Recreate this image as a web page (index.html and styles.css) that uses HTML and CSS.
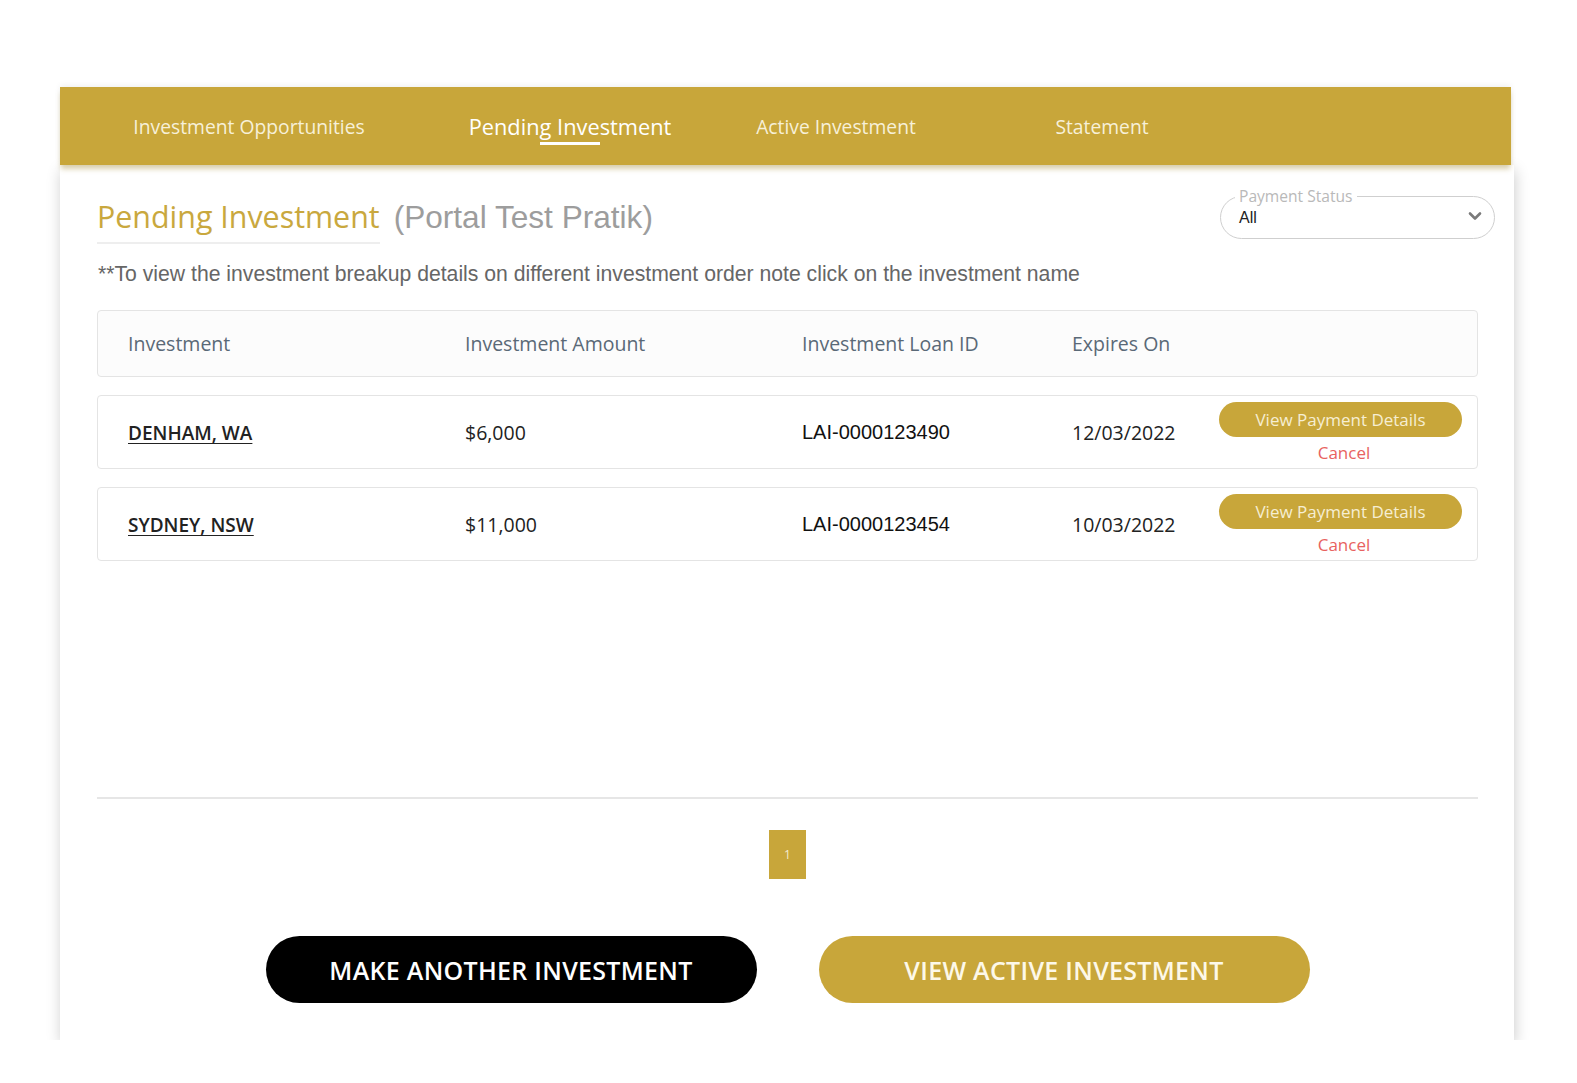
FILE: index.html
```html
<!DOCTYPE html>
<html>
<head>
<meta charset="utf-8">
<link rel="stylesheet" href="styles.css">
</head>
<body>
<div class="panel">
  <nav class="tabs">
    <a class="tab tab-first">Investment Opportunities</a>
    <a class="tab active">Pending Investment</a>
    <a class="tab">Active Investment</a>
    <a class="tab">Statement</a>
  </nav>
  <div class="card">
    <div class="head">
      <h1 class="title"><span class="title-main">Pending Investment</span><span class="title-sub">(Portal Test Pratik)</span></h1>
      <div class="select">
        <span class="select-label">Payment Status</span>
        <span class="select-value">All</span>
        <svg class="chev" width="14" height="10" viewBox="0 0 14 10"><path d="M2 2.5 L7 7.5 L12 2.5" fill="none" stroke="#7a7a7a" stroke-width="2.6" stroke-linecap="round" stroke-linejoin="round"/></svg>
      </div>
    </div>
    <p class="note">**To view the investment breakup details on different investment order note click on the investment name</p>
    <div class="table">
      <div class="row thead">
        <div>Investment</div>
        <div>Investment Amount</div>
        <div>Investment Loan ID</div>
        <div>Expires On</div>
        <div></div>
      </div>
      <div class="row item">
        <div><a class="name">DENHAM, WA</a></div>
        <div>$6,000</div>
        <div class="loan">LAI-0000123490</div>
        <div>12/03/2022</div>
        <div class="actions"><button class="pay">View Payment Details</button><a class="cancel">Cancel</a></div>
      </div>
      <div class="row item">
        <div><a class="name">SYDNEY, NSW</a></div>
        <div>$11,000</div>
        <div class="loan">LAI-0000123454</div>
        <div>10/03/2022</div>
        <div class="actions"><button class="pay">View Payment Details</button><a class="cancel">Cancel</a></div>
      </div>
    </div>
    <div class="pager"><span class="page">1</span></div>
    <div class="cta">
      <button class="big big-dark">MAKE ANOTHER INVESTMENT</button>
      <button class="big big-gold">VIEW ACTIVE INVESTMENT</button>
    </div>
  </div>
</div>
</body>
</html>
```

FILE: styles.css
```css
* { box-sizing: border-box; }
html, body { margin: 0; padding: 0; background: #ffffff; }
body { font-family: "Open Sans", "Liberation Sans", sans-serif; color: #222; }

.panel {
  width: 1454px;
  margin: 87px 0 0 60px;
}

.tabs {
  width: 1451px;
  height: 78px;
  background: #c8a63a;
  display: flex;
  align-items: center;
  padding-left: 56px;
  position: relative;
  z-index: 2;
  box-shadow: 0 5px 5px -1px rgba(150, 120, 30, 0.35), 0 -2px 6px rgba(0,0,0,0.06);
}
.tab {
  width: 266px;
  text-align: center;
  color: #f7f0d8;
  font-size: 19.3px;
  line-height: 30px;
  position: relative;
  top: 1px;
}
.tab-first { margin-right: 55px; }
.tab.active {
  color: #ffffff;
  font-size: 21.8px;
}
.tab.active::after {
  content: "";
  position: absolute;
  left: 50%;
  margin-left: -30px;
  width: 60px;
  height: 3px;
  bottom: -3px;
  background: #ffffff;
}

.card {
  background: #fff;
  padding: 0 36px 37px 37px;
  box-shadow: 1px 5px 14px rgba(0, 0, 0, 0.2);
}

.head {
  display: flex;
  justify-content: space-between;
  align-items: flex-start;
  margin-right: -17px;
}
.title {
  margin: 32px 0 0 0;
  font-weight: 400;
  display: flex;
  align-items: flex-start;
}
.title-main {
  font-family: "Open Sans", sans-serif;
  font-size: 30.4px;
  line-height: 40px;
  color: #c9a83e;
  padding-bottom: 5px;
  border-bottom: 2px solid #eeeeee;
}
.title-sub {
  font-family: "Liberation Sans", Arial, sans-serif;
  font-size: 31.6px;
  line-height: 40px;
  color: #9d9d9d;
  margin-left: 14px;
}

.select {
  margin-top: 31px;
  width: 275px;
  height: 43px;
  border: 1px solid #cfcfcf;
  border-radius: 22px;
  position: relative;
  padding: 9px 0 0 18px;
}
.select-label {
  position: absolute;
  left: 14px;
  top: -11px;
  background: #fff;
  padding: 0 4px;
  font-size: 15.6px;
  line-height: 20px;
  color: #b9b9b9;
}
.select-value {
  font-family: "Liberation Sans", Arial, sans-serif;
  font-size: 16px;
  color: #222;
  line-height: 20px;
}
.chev {
  position: absolute;
  right: 12px;
  top: 14px;
}

.note {
  margin: 18px 0 0 1px;
  font-family: "Liberation Sans", Arial, sans-serif;
  font-size: 21.2px;
  line-height: 23px;
  color: #666;
}

.table {
  margin-top: 25px;
  min-height: 489px;
  border-bottom: 2px solid #e6e6e6;
}
.row {
  display: grid;
  grid-template-columns: 337px 337px 270px 147px 243px;
  align-items: center;
  padding: 0 14px 0 30px;
  border: 1px solid #e4e4e4;
  border-radius: 4px;
  font-size: 19.5px;
}
.thead {
  height: 67px;
  background: #fcfcfc;
  color: #5a6977;
}
.item {
  height: 74px;
  margin-top: 18px;
  color: #222;
}
.name {
  font-size: 19px;
  font-weight: 600;
  text-decoration: underline;
  text-underline-offset: 3px;
  color: #222;
}
.loan {
  font-family: "Liberation Sans", Arial, sans-serif;
  font-size: 20px;
  color: #111;
}
.actions {
  display: flex;
  flex-direction: column;
  align-items: center;
  align-self: start;
  padding-top: 6px;
}
.pay {
  width: 243px;
  height: 35px;
  border: none;
  border-radius: 18px;
  background: #c8a63a;
  color: #f6eed2;
  font-family: "Open Sans", sans-serif;
  font-size: 17px;
  padding: 0;
}
.cancel {
  font-size: 17px;
  line-height: 23px;
  color: #e8625f;
  margin-top: 4px;
  margin-left: 7px;
}

.pager {
  display: flex;
  justify-content: center;
  margin-top: 31px;
}
.page {
  width: 37px;
  height: 49px;
  background: #c8a63a;
  color: #f4ead0;
  font-size: 12px;
  display: flex;
  align-items: center;
  justify-content: center;
}

.cta {
  display: flex;
  justify-content: center;
  gap: 62px;
  margin-top: 57px;
}
.big {
  width: 491px;
  height: 67px;
  border: none;
  border-radius: 34px;
  font-family: "Open Sans", sans-serif;
  font-size: 25px;
  font-weight: 600;
  letter-spacing: 0.3px;
  color: #fff;
  padding: 0;
}
.big-dark { background: #000; }
.big-gold { background: #c8a63a; color: #fdf8e8; }
```
